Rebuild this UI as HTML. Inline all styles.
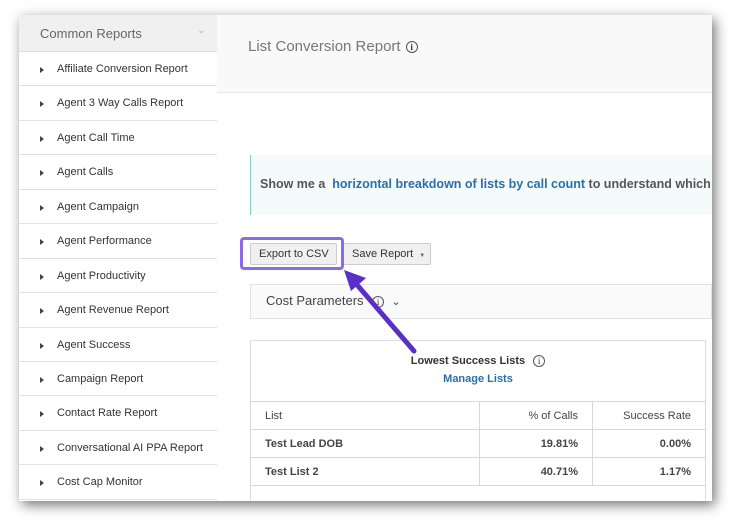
<!DOCTYPE html>
<html><head><style>
*{box-sizing:border-box;margin:0;padding:0}
body{width:737px;height:527px;background:#fff;font-family:"Liberation Sans",sans-serif;position:relative;overflow:hidden}
#win{position:absolute;left:19px;top:15px;width:693px;height:486px;background:#fff;box-shadow:3px 4px 12px rgba(0,0,0,.55);overflow:hidden}
#side{position:absolute;left:0;top:0;width:198px;height:486px;background:#fff}
#side .hd{height:37px;background:#f0f0f0;border-bottom:1px solid #ddd;color:#666;font-size:13px;padding:11px 0 0 21px;position:relative}
#side .hd span{position:absolute;right:12px;top:10px;font-size:9px;color:#aaa}
.it{height:34.45px;border-bottom:1px solid #e2e2e2;font-size:11px;color:#333;padding-top:11px;padding-left:38px;position:relative}
.it:before{content:"";position:absolute;left:21px;top:15px;border-left:4px solid #444;border-top:3px solid transparent;border-bottom:3px solid transparent}
#main{position:absolute;left:198px;top:0;right:0;height:486px}
.top{height:78px;background:#f9f9f9;border-bottom:1px solid #e8e8e8;padding:23px 0 0 31px;font-size:15px;color:#777}
.ic{display:inline-block;width:12px;height:12px;border:1px solid #555;border-radius:50%;font-size:9px;text-align:center;line-height:10px;color:#333;vertical-align:middle;margin-left:5px;font-family:"Liberation Serif",serif;font-weight:bold}
.info{position:absolute;left:33px;top:140px;right:0;height:60px;background:#f5fafb;border-left:1px solid #8cc;font-size:12.5px;font-weight:bold;color:#555;padding:22px 0 0 9px;white-space:nowrap;overflow:hidden}
.info b{color:#2a6fa8}
.btn{position:absolute;top:228px;height:22px;border:1px solid #ccc;background:#f0f0f0;border-radius:2px;font-size:11px;color:#333;padding:4px 0 0 8px}
.hl{position:absolute;left:23px;top:222px;width:104px;height:33px;border:3px solid #8c6ce6;border-radius:4px}
.cost{position:absolute;left:33px;top:269px;right:0;height:35px;border:1px solid #e2e2e2;background:#fafafa;font-size:13px;color:#444;padding:8px 0 0 15px}
.tb{position:absolute;left:33px;top:325px;width:456px;height:170px;border:1px solid #ddd}
.tt{text-align:center;font-size:11px;color:#333;font-weight:bold;margin-top:14px}
.ml{text-align:center;font-size:11px;color:#2a6fa8;font-weight:bold;margin-top:6px}
table{position:absolute;top:60px;left:-1px;width:456px;border-collapse:collapse;font-size:11px;color:#444}
td{border:1px solid #d5d8e0;height:28px;padding:0 14px}
td.r{text-align:right}
tr.b td{font-weight:bold}
</style></head><body>
<div id="win">
<div id="side">
<div class="hd">Common Reports<span>⌄</span></div>
<div class="it">Affiliate Conversion Report</div>
<div class="it">Agent 3 Way Calls Report</div>
<div class="it">Agent Call Time</div>
<div class="it">Agent Calls</div>
<div class="it">Agent Campaign</div>
<div class="it">Agent Performance</div>
<div class="it">Agent Productivity</div>
<div class="it">Agent Revenue Report</div>
<div class="it">Agent Success</div>
<div class="it">Campaign Report</div>
<div class="it">Contact Rate Report</div>
<div class="it">Conversational AI PPA Report</div>
<div class="it">Cost Cap Monitor</div>
</div>
<div id="main">
<div class="top">List Conversion Report<span class="ic">i</span></div>
<div class="info">Show me a &nbsp;<b>horizontal breakdown of lists by call count</b> to understand which lists</div>
<div class="btn" style="left:33px;width:87px">Export to CSV</div>
<div class="btn" style="left:126px;width:88px">Save Report&nbsp; <span style="font-size:6px;color:#666">▼</span></div>
<div class="hl"></div>
<div class="cost">Cost Parameters <span class="ic" style="font-weight:normal">i</span> &nbsp;<span style="font-size:11px">⌄</span></div>
<div class="tb">
<div class="tt">Lowest Success Lists <span class="ic" style="font-weight:normal">i</span></div>
<div class="ml">Manage Lists</div>
<table>
<tr><td style="width:229px">List</td><td class="r" style="width:113px">% of Calls</td><td class="r">Success Rate</td></tr>
<tr class="b"><td>Test Lead DOB</td><td class="r">19.81%</td><td class="r">0.00%</td></tr>
<tr class="b"><td>Test List 2</td><td class="r">40.71%</td><td class="r">1.17%</td></tr>
</table>
</div>
</div>
</div>
<svg style="position:absolute;left:0;top:0" width="737" height="527">
<line x1="414" y1="351" x2="352" y2="279" stroke="#5a2fc8" stroke-width="5" stroke-linecap="round"/>
<polygon points="344,270 366,278 351,291" fill="#5a2fc8"/>
</svg>
</body></html>
